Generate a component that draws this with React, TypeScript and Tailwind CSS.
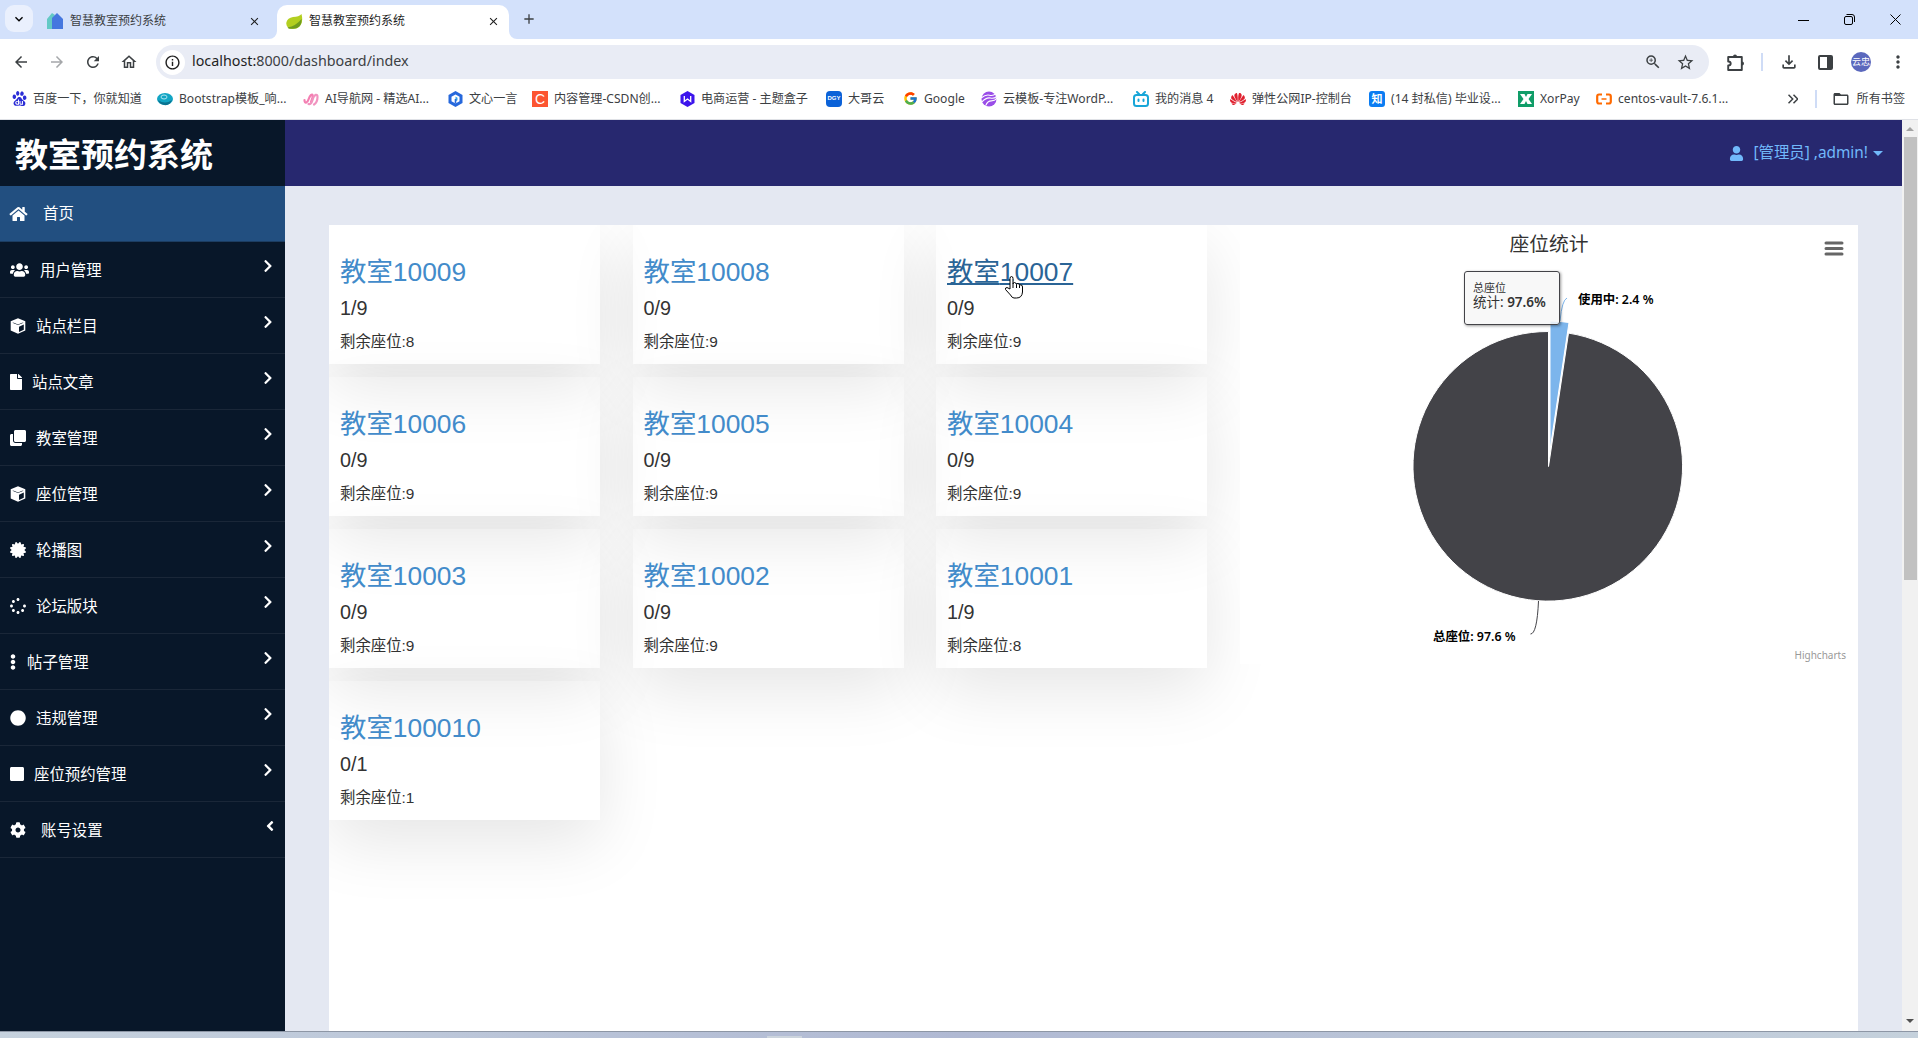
import React from "react";
import { FaHome, FaUsers, FaFile, FaClone, FaCertificate, FaSpinner, FaEllipsisV, FaCircle, FaSquare, FaCog, FaUser, FaChevronRight, FaAngleLeft } from "react-icons/fa";
import { FcGoogle } from "react-icons/fc";
import { SiHuawei, SiBaidu } from "react-icons/si";
import { MdArrowBack, MdArrowForward, MdRefresh, MdOutlineHome, MdInfoOutline, MdOutlineZoomIn, MdStarBorder, MdOutlineFileDownload, MdMoreVert, MdFolderOpen, MdClose, MdAdd, MdKeyboardArrowDown } from "react-icons/md";

const ui = "font-['Noto_Sans','Noto_Sans_CJK_SC',sans-serif]";

function HouseLogo() {
  return (
    <svg width="18" height="18" viewBox="0 0 18 18">
      <path d="M1 17V7l5-6 3 2-3 5v9z" fill="#63c9c5" />
      <path d="M6 17V6l5-5 6 6v10z" fill="#4577df" />
    </svg>
  );
}

function LeafLogo() {
  return (
    <svg width="17" height="17" viewBox="0 0 17 17">
      <path d="M15.500 1Q17.500 9 14 13T3 15.500Q-.5 13 .5 9T7 4Q13 4 15.500 1z" fill="#b3cf20" />
      <path d="M1.500 14.500Q10 13 15.500 6Q16 10.500 13.500 13.300T4.500 15.800Q2.500 16 1.500 14.500z" fill="#6f9c1f" />
    </svg>
  );
}

function Cube() {
  return (
    <svg width="16" height="16" viewBox="0 0 16 16">
      <path fillRule="evenodd" fill="currentColor" d="M8 .3L15.300 3.200V12.500L8 15.800.7 12.500V3.200zM8 7.100L13.600 4.700 8 2.600 2.400 4.700zM9 14L13.800 11.700V6.600L9 8.700z" />
      <path fill="currentColor" d="M8 1.600L13.800 4.100 8 6.500 2.200 4.100z" />
    </svg>
  );
}

function Tab({ active, w, children }: { active?: boolean; w: string; children: React.ReactNode }) {
  return (
    <div className={`relative flex items-center ${w} h-[34px] pb-[2px] pl-[9px] text-[12px] ${active ? "rounded-t-[10px] bg-white text-[#1f1f1f]" : "text-[#3c4043]"}`}>
      {active && (
        <>
          <svg className="absolute -left-2 bottom-0" width="8" height="8" viewBox="0 0 8 8"><path d="M8 0A8 8 0 0 1 0 8H8z" fill="#fff" /></svg>
          <svg className="absolute -right-2 bottom-0" width="8" height="8" viewBox="0 0 8 8"><path d="M0 0A8 8 0 0 0 8 8H0z" fill="#fff" /></svg>
        </>
      )}
      {children}
      <span className="ml-[6px] flex-1 whitespace-nowrap">智慧教室预约系统</span>
      <MdClose className="size-[13px] text-[#1f1f1f]" />
    </div>
  );
}

const Paw = <SiBaidu className="size-[15px] text-[#2b2dd6]" />;
const Boot = (
  <svg width="16" height="16" viewBox="0 0 16 16"><ellipse cx="8" cy="8" rx="8" ry="6" fill="#12a5c4" /><path d="M1 9q7 5 14 0-2 6-8 5-5-1-6-5z" fill="#0b7390" /><ellipse cx="7" cy="6" rx="3" ry="2" fill="none" stroke="#bdeaf2" strokeWidth=".9" /></svg>
);
const AiNav = (
  <svg width="16" height="16" viewBox="0 0 16 16" fill="none" strokeLinecap="round" strokeWidth="2.200"><path d="M1.500 9C1.500 13 4.500 12 5.500 8.500S9.500 1.500 9.800 5C9.800 7 8.500 9 8 11" stroke="#f47fb2" /><path d="M5.500 13C8.500 14 9.200 10 10.200 7S14.500 2 14.500 6C14.500 9 13.500 12 11 13.500" stroke="#f193bf" /></svg>
);
const Wenxin = (
  <svg width="15" height="16" viewBox="0 0 15 16"><path d="M7.500 0l7 4v8l-7 4-7-4V4z" fill="#2668dc" /><path d="M7.500 3.500l4 2.200v4.600l-4 2.200-4-2.200V5.700z" fill="#fff" /><path d="M7.500 5.500l2 1.200v2.600l-2 1.200z" fill="#37a3e8" /><path d="M7.500 8v4.500" stroke="#2668dc" strokeWidth="1.600" /></svg>
);
const Csdn = <span className="flex size-4 items-center justify-center bg-[#fc5531] font-['Liberation_Sans'] text-[14px] leading-none text-white">C</span>;
const Hex = (
  <svg width="15" height="16" viewBox="0 0 15 16"><path d="M7.500 0l7 4v8l-7 4-7-4V4z" fill="#3c14ec" /><path d="M4.300 5v5.500L7.500 8l3.200 2.500V5" fill="none" stroke="#fff" strokeWidth="1.300" /></svg>
);
const Dgy = <span className="flex size-4 items-center justify-center rounded-[4px] bg-[#0b62d8] font-['Liberation_Sans'] text-[6px] font-bold text-white">DGY</span>;
const Cloud = (
  <svg width="17" height="16" viewBox="0 0 17 16"><circle cx="8.500" cy="8" r="8" fill="#9a4de8" /><path d="M0 7q5-4 9-3t7-2M1 11q5-5 9-4t7-2M5 15q2-5 6-5t6-3" fill="none" stroke="#fff" strokeWidth="1.200" /></svg>
);
const Bili = (
  <svg width="16" height="16" viewBox="0 0 16 16" fill="none" stroke="#18a6d8" strokeWidth="2" strokeLinecap="round"><rect x="1" y="4" width="14" height="11" rx="2.500" /><path d="M4 1l2 2M12 1l-2 2M5.500 8.500v1.500M10.500 8.500v1.500" /></svg>
);
const Zhi = <span className="flex size-4 items-center justify-center rounded-[3px] bg-[#0a7cf2] text-[11px] font-bold leading-none text-white">知</span>;
const Xor = <span className="flex size-4 items-center justify-center bg-[#109d68]"><svg width="16" height="16" viewBox="0 0 16 16"><path d="M2 3h4.500L8 6l1.500-3H14l-3.500 5L14 13H9.500L8 10l-1.500 3H2l3.500-5z" fill="#fff" /></svg></span>;
const Ali = (
  <svg width="16" height="16" viewBox="0 0 16 16" fill="none" stroke="#ff6a00" strokeWidth="2.200"><path d="M6 3.500H3Q1.200 3.500 1.200 5.500v5q0 2 1.800 2h3M10 3.500h3q1.800 0 1.800 2v5q0 2-1.800 2h-3" /><path d="M5.500 8h5" strokeWidth="1.500" /></svg>
);

const bookmarks: [React.ReactNode, string, string][] = [
  [Paw, "百度一下，你就知道", "w-[146px]"],
  [Boot, "Bootstrap模板_响...", "w-[146px]"],
  [AiNav, "AI导航网 - 精选AI...", "w-[144px]"],
  [Wenxin, "文心一言", "w-[85px]"],
  [Csdn, "内容管理-CSDN创...", "w-[147px]"],
  [Hex, "电商运营 - 主题盒子", "w-[147px]"],
  [Dgy, "大哥云", "w-[76px]"],
  [<FcGoogle className="size-[15px]" />, "Google", "w-[79px]"],
  [Cloud, "云模板-专注WordP...", "w-[152px]"],
  [Bili, "我的消息 4", "w-[97px]"],
  [<SiHuawei className="size-4 text-[#e0212f]" />, "弹性公网IP-控制台", "w-[139px]"],
  [Zhi, "(14 封私信) 毕业设...", "w-[149px]"],
  [Xor, "XorPay", "w-[78px]"],
  [Ali, "centos-vault-7.6.1...", "w-[150px]"],
];

const menu: [React.ReactNode, string, string][] = [
  [<FaUsers className="h-[16px] w-[19px]" />, "用户管理", "gap-[11px]"],
  [<Cube />, "站点栏目", "gap-[10px]"],
  [<FaFile className="h-[16px] w-[12px]" />, "站点文章", "gap-[10px]"],
  [<FaClone className="size-[16px]" />, "教室管理", "gap-[10px]"],
  [<Cube />, "座位管理", "gap-[10px]"],
  [<FaCertificate className="size-[16px]" />, "轮播图", "gap-[10px]"],
  [<FaSpinner className="size-[16px]" />, "论坛版块", "gap-[10px]"],
  [<FaEllipsisV className="h-[16px] w-[6px]" />, "帖子管理", "gap-[11px]"],
  [<FaCircle className="size-[16px]" />, "违规管理", "gap-[10px]"],
  [<FaSquare className="h-[16px] w-[14px]" />, "座位预约管理", "gap-[10px]"],
  [<FaCog className="size-[16px]" />, "账号设置", "gap-[15px]"],
];

const rooms: [string, string, number][] = [
  ["10009", "1/9", 8], ["10008", "0/9", 9], ["10007", "0/9", 9],
  ["10006", "0/9", 9], ["10005", "0/9", 9], ["10004", "0/9", 9],
  ["10003", "0/9", 9], ["10002", "0/9", 9], ["10001", "1/9", 8],
  ["100010", "0/1", 1],
];

function Browser() {
  return (
    <div className={`${ui} shrink-0 bg-white text-[#3c4043]`}>
      <div className="flex h-[39px] items-end bg-[#d3e1fb]">
        <div className="mb-[7px] ml-[5px] flex h-[27px] w-[28px] items-center justify-center rounded-[9px] bg-[#eaf0fd]">
          <MdKeyboardArrowDown className="size-[16px] text-black" />
        </div>
        <div className="ml-[4px] flex">
          <Tab w="w-[240px] pr-[16px]"><HouseLogo /></Tab>
          <Tab active w="w-[232px] pr-[9px]"><LeafLogo /></Tab>
        </div>
        <MdAdd className="mb-[12px] ml-[12px] size-[16px]" />
        <div className="ml-auto mr-[17px] flex h-[39px] items-center gap-[35px] text-black">
          <svg width="11" height="12" viewBox="0 0 11 12"><path d="M0 6.500h11" stroke="currentColor" /></svg>
          <svg width="11" height="11" viewBox="0 0 11 11" fill="none" stroke="currentColor"><rect x=".5" y="2.500" width="8" height="8" rx="1.500" /><path d="M2.500.5H8Q10.500.5 10.500 3v5" /></svg>
          <svg width="11" height="11" viewBox="0 0 11 11"><path d="M.5.5l10 10M10.500.5l-10 10" stroke="currentColor" /></svg>
        </div>
      </div>
      <div className="flex h-[46px] items-center pl-[12px] pr-[12px]">
        <div className="flex w-[144px] gap-[18px] text-[#3c4043]">
          <MdArrowBack className="size-[18px]" />
          <MdArrowForward className="size-[18px] text-[#a5a7aa]" />
          <MdRefresh className="size-[18px]" />
          <MdOutlineHome className="size-[18px]" />
        </div>
        <div className="flex h-[34px] w-[1553px] items-center rounded-full bg-[#e9ecf5] pl-[4px] pr-[14px]">
          <span className="flex size-[25px] items-center justify-center rounded-full bg-white"><MdInfoOutline className="size-[17px] text-[#1f1f1f]" /></span>
          <span className="-mt-[2px] ml-[7px] text-[14.300px]"><span className="text-[#1f1f1f]">localhost:</span>8000/dashboard/index</span>
          <MdOutlineZoomIn className="ml-auto size-[18px]" />
          <MdStarBorder className="ml-[14px] size-[19px]" />
        </div>
        <svg className="ml-[17px] shrink-0" width="19" height="19" viewBox="0 0 19 19">
          <path d="M2.200 4h13.600v13H2.200v-4.500q2.500 0 2.500-2t-2.500-2z" fill="none" stroke="#3c4043" strokeWidth="1.900" strokeLinejoin="round" />
          <path d="M7 3.500a2 2 0 0 1 4 0zM16 8.500a2 2 0 0 1 0 4z" fill="#3c4043" />
        </svg>
        <span className="ml-[16px] h-[18px] w-[2px] shrink-0 bg-[#cfdcf6]" />
        <MdOutlineFileDownload className="ml-[16px] size-[20px]" />
        <svg className="ml-[19px]" width="15" height="15" viewBox="0 0 15 15"><rect x="1" y="1" width="13" height="13" rx="1" fill="none" stroke="#3c4043" strokeWidth="2" /><path d="M9 1h5v13H9z" fill="#3c4043" /></svg>
        <span className="ml-[18px] flex size-[20px] items-center justify-center whitespace-nowrap rounded-full bg-[#5b68bd] text-[9px] text-white">云忠</span>
        <MdMoreVert className="-mr-[2px] ml-auto size-[20px]" />
      </div>
      <div className="flex h-[35px] items-center border-b border-[#dfe1e6] pb-[6px] pl-[11px] text-[12.100px]">
        {bookmarks.map(([icon, label, w]) => (
          <div key={label} className={`flex shrink-0 items-center gap-[6px] whitespace-nowrap ${w}`}>
            <span className="flex w-[16px] shrink-0 justify-center">{icon}</span>{label}
          </div>
        ))}
        <svg className="ml-auto" width="10" height="10" viewBox="0 0 10 10" fill="none" stroke="#3c4043" strokeWidth="1.500"><path d="M.5.8L4.700 5 .5 9.200M5.500.8L9.700 5 5.500 9.200" /></svg>
        <span className="ml-[17px] h-[18px] w-[2px] bg-[#cfdcf6]" />
        <MdFolderOpen className="ml-[15px] size-[18px]" />
        <span className="ml-[7px] mr-[13px] whitespace-nowrap">所有书签</span>
      </div>
    </div>
  );
}

function Sidebar() {
  return (
    <aside className="w-[285px] shrink-0 bg-[#081729] text-white">
      <div className="flex h-[66px] items-center pl-[15px] pt-[3px] text-[33px] font-bold">教室预约系统</div>
      <div className="flex h-[56px] items-center gap-[15px] border-b border-[#1c3d61] bg-[#224f80] pl-[9px] pt-[1px] text-[15.400px]">
        <FaHome className="h-[16px] w-[19px]" /><span>首页</span>
      </div>
      {menu.map(([icon, label, gap], i) => (
        <div key={label} className="flex h-[56px] items-center justify-between border-b border-[#1a2738] pl-[10px] pr-[10px] pt-[2px] text-[15.400px]">
          <div className={`flex items-center ${gap}`}>{icon}<span>{label}</span></div>
          {i < 10 ? <FaChevronRight className="mb-[9px] size-[14px]" /> : <FaAngleLeft className="-mr-[3px] mb-[9px] size-[16px]" />}
        </div>
      ))}
    </aside>
  );
}

function Chart() {
  return (
    <div className="relative z-10 h-[439px] w-[618px] bg-white text-[#333]">
      <svg className="absolute inset-0" width="618" height="442" viewBox="0 0 618 442" fill="none">
        <path d="M308.500 241.500V106.500A134.800 134.800 0 1 0 328.500 108.100z" fill="#434348" stroke="#fff" />
        <path d="M310 225V96A135 135 0 0 1 329 97.500z" fill="#7cb5ec" stroke="#fff" />
        <path d="M327 73Q322 75 320 96" stroke="#7cb5ec" />
        <path d="M298.500 376Q297 409 290.500 409" stroke="#434348" />
        <path d="M586 18h16M586 23.500h16M586 29h16" stroke="#666" strokeWidth="3" strokeLinecap="round" />
      </svg>
      <div className="pt-[5px] text-center text-[19.800px] leading-[28px]">座位统计</div>
      <div className="absolute left-[338px] top-[66px] text-[12.400px] font-semibold leading-[18px] text-black">使用中: 2.4 %</div>
      <div className="absolute left-[193px] top-[403px] text-[12.400px] font-semibold leading-[18px] text-black">总座位: 97.6 %</div>
      <div className="absolute left-[224px] top-[46px] h-[54px] w-[96px] rounded-[3px] border border-[#434348] bg-[#f7f7f7]/85 pl-[8px] pt-[8px] shadow-[1px_1px_3px_rgba(0,0,0,.4)]">
        <div className="text-[11px] leading-[15px]">总座位</div>
        <div className="whitespace-nowrap text-[13.500px] leading-[15px]">统计: <b className="font-semibold">97.6%</b></div>
      </div>
      <div className="absolute right-[12px] top-[423px] text-[10px] leading-[14px] text-[#999]">Highcharts</div>
    </div>
  );
}

function HandCursor() {
  return (
    <svg className="absolute left-[57px] top-[19px]" width="20" height="25" viewBox="0 0 20 25">
      <path d="M6 14V3.500Q6 1.500 7.500 1.500T9 3.500V9Q9 7.500 10.500 7.500T12.500 9.500Q12.500 8.500 14 8.500T15.500 10.500Q16 9.500 17 10Q18.500 10 18.500 12V17Q18 23 12.500 23H10Q8 23 6.500 20L1.500 14.500Q1 12.500 3 12.500Z" fill="#fff" stroke="#000" strokeLinejoin="round" />
      <path d="M9 9v4M12.500 9.500V13M15.500 10.500V13" stroke="#000" />
    </svg>
  );
}

export default function App() {
  return (
    <div className={`flex h-[1038px] w-[1918px] flex-col overflow-hidden ${ui}`}>
      <Browser />
      <div className="flex h-[911px] shrink-0">
        <Sidebar />
        <main className="flex min-w-0 flex-1 flex-col bg-[#e4e8f2]">
          <header className="flex h-[66px] shrink-0 items-center justify-end bg-[#27286f] pr-[19px] text-[15.400px] text-[#71b9fb]">
            <FaUser className="size-[15px]" />
            <span className="ml-[9px]">[管理员] ,admin!</span>
            <span className="ml-[5px] border-x-[5px] border-t-[5px] border-x-transparent border-t-[#71b9fb]" />
          </header>
          <section className="ml-[44px] mt-[39px] flex w-[1529px] flex-1 items-start overflow-hidden bg-white">
            <div className="grid w-[911px] shrink-0 grid-cols-[271px_271px_271px] gap-x-[32.500px] gap-y-[13px] font-['Liberation_Sans','Noto_Sans_CJK_SC',sans-serif]">
              {rooms.map(([id, used, left]) => (
                <article key={id} className="h-[139px] pl-[11px] pt-[31px] text-[#333] shadow-[0_22px_66px_rgba(0,0,0,.1)]">
                  <h3 className="relative w-fit text-[26.400px] leading-[32px]">
                    <a className={id === "10007" ? "text-[#2a6496] underline decoration-2 underline-offset-[2px] [text-decoration-skip-ink:none]" : "text-[#428bca]"}>教室{id}</a>
                    {id === "10007" && <HandCursor />}
                  </h3>
                  <div className="mt-[6px] text-[19.800px] leading-[28px]">{used}</div>
                  <div className="mt-[9px] text-[15.400px] leading-[22px]">剩余座位:{left}</div>
                </article>
              ))}
            </div>
            <Chart />
          </section>
        </main>
        <div className="flex w-[16px] shrink-0 flex-col items-center bg-[#f1f1f1]">
          <span className="mt-[7px] border-x-4 border-b-4 border-x-transparent border-b-[#a3a3a3]" />
          <span className="mt-[6px] h-[443px] w-[13px] bg-[#c1c1c1]" />
          <span className="mb-[8px] mt-auto border-x-4 border-t-4 border-x-transparent border-t-[#505050]" />
        </div>
      </div>
      <div className="flex h-[7px] shrink-0 items-end border-t border-[#8d96a5] bg-linear-to-r from-[#c6d2de] via-[#b0b9d3] to-[#c5d1dc] pl-[767px]">
        <span className="h-[2px] w-[35px] bg-[#ccd4dd]" />
      </div>
    </div>
  );
}
